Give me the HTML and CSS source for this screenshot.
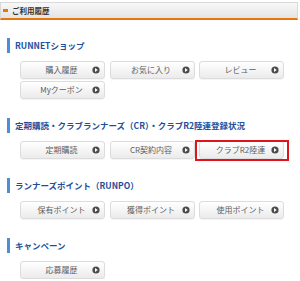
FILE: index.html
```html
<!DOCTYPE html>
<html lang="ja">
<head>
<meta charset="utf-8">
<title>ご利用履歴</title>
<link rel="stylesheet" href="styles.css">
</head>
<body>
<div class="page">
  <div class="panel-head"><span class="mark"></span><span class="panel-title">ご利用履歴</span></div>

  <section class="sec">
    <h2 class="sec-title">RUNNETショップ</h2>
    <div class="btns">
      <a class="btn"><span class="lbl">購入履歴</span><svg class="ico" viewBox="0 0 8 8"><circle cx="4" cy="4" r="3.6"/><polygon points="3,2.1 5.7,4 3,5.9"/></svg></a>
      <a class="btn"><span class="lbl">お気に入り</span><svg class="ico" viewBox="0 0 8 8"><circle cx="4" cy="4" r="3.6"/><polygon points="3,2.1 5.7,4 3,5.9"/></svg></a>
      <a class="btn"><span class="lbl">レビュー</span><svg class="ico" viewBox="0 0 8 8"><circle cx="4" cy="4" r="3.6"/><polygon points="3,2.1 5.7,4 3,5.9"/></svg></a>
      <a class="btn"><span class="lbl">Myクーポン</span><svg class="ico" viewBox="0 0 8 8"><circle cx="4" cy="4" r="3.6"/><polygon points="3,2.1 5.7,4 3,5.9"/></svg></a>
    </div>
  </section>

  <section class="sec">
    <h2 class="sec-title">定期購読・クラブランナーズ（CR）・クラブR2陸連登録状況</h2>
    <div class="btns">
      <a class="btn"><span class="lbl">定期購読</span><svg class="ico" viewBox="0 0 8 8"><circle cx="4" cy="4" r="3.6"/><polygon points="3,2.1 5.7,4 3,5.9"/></svg></a>
      <a class="btn"><span class="lbl">CR契約内容</span><svg class="ico" viewBox="0 0 8 8"><circle cx="4" cy="4" r="3.6"/><polygon points="3,2.1 5.7,4 3,5.9"/></svg></a>
      <a class="btn is-marked"><span class="lbl">クラブR2陸連</span><svg class="ico" viewBox="0 0 8 8"><circle cx="4" cy="4" r="3.6"/><polygon points="3,2.1 5.7,4 3,5.9"/></svg></a>
    </div>
  </section>

  <section class="sec">
    <h2 class="sec-title">ランナーズポイント（RUNPO）</h2>
    <div class="btns">
      <a class="btn"><span class="lbl">保有ポイント</span><svg class="ico" viewBox="0 0 8 8"><circle cx="4" cy="4" r="3.6"/><polygon points="3,2.1 5.7,4 3,5.9"/></svg></a>
      <a class="btn"><span class="lbl">獲得ポイント</span><svg class="ico" viewBox="0 0 8 8"><circle cx="4" cy="4" r="3.6"/><polygon points="3,2.1 5.7,4 3,5.9"/></svg></a>
      <a class="btn"><span class="lbl">使用ポイント</span><svg class="ico" viewBox="0 0 8 8"><circle cx="4" cy="4" r="3.6"/><polygon points="3,2.1 5.7,4 3,5.9"/></svg></a>
    </div>
  </section>

  <section class="sec">
    <h2 class="sec-title">キャンペーン</h2>
    <div class="btns">
      <a class="btn"><span class="lbl">応募履歴</span><svg class="ico" viewBox="0 0 8 8"><circle cx="4" cy="4" r="3.6"/><polygon points="3,2.1 5.7,4 3,5.9"/></svg></a>
    </div>
  </section>
</div>
</body>
</html>
```

FILE: styles.css
```css
* { box-sizing: border-box; }
html, body { margin: 0; padding: 0; background: #fff; }
body {
  font-family: "Noto Sans CJK JP", "Noto Sans", sans-serif;
  color: #333;
}
.page {
  width: 300px;
  padding-top: 2px;
}
.panel-head {
  width: 298px;
  height: 18px;
  display: flex;
  align-items: center;
  padding-left: 2px;
  border: 1px solid #d9d9d9;
  border-bottom: 2px solid #e8760f;
  background: linear-gradient(#f8f8f8, #e4e4e4);
}
.mark {
  width: 5px;
  height: 3px;
  background: #e8760f;
  margin-right: 4px;
}
.panel-title {
  font-size: 7.5px;
  font-weight: bold;
  color: #333;
  line-height: 1;
}
.sec {
  margin-top: 18px;
}
.sec + .sec { margin-top: 19px; }
.sec-title {
  margin: 0 0 8px 7px;
  height: 15px;
  display: flex;
  align-items: center;
  padding-left: 5px;
  border-left: 3px solid #4a8fd8;
  font-size: 8.5px;
  font-weight: bold;
  color: #1d4f9c;
  line-height: 1;
  white-space: nowrap;
}
.btns {
  margin-left: 20px;
  display: grid;
  grid-template-columns: repeat(3, 85px);
  column-gap: 4.5px;
  row-gap: 2px;
}
.btn {
  position: relative;
  height: 18px;
  display: flex;
  align-items: center;
  padding: 0 4px 0 10px;
  border: 1px solid #dcdcdc;
  border-radius: 3px;
  background: linear-gradient(#ffffff, #ebebeb);
  box-shadow: 0 1px 0 rgba(0,0,0,0.04);
  color: #5e5e5e;
  font-size: 8px;
  line-height: 1;
  text-decoration: none;
}
.lbl {
  flex: 1;
  text-align: center;
  white-space: nowrap;
}
.ico {
  width: 8px;
  height: 8px;
  flex: none;
}
.ico circle { fill: #4b4b4b; }
.ico polygon { fill: #fff; }
.is-marked::after {
  content: "";
  position: absolute;
  left: -5px;
  right: -6px;
  top: -2px;
  bottom: -3px;
  border: 2px solid #e0141b;
  pointer-events: none;
}
```
